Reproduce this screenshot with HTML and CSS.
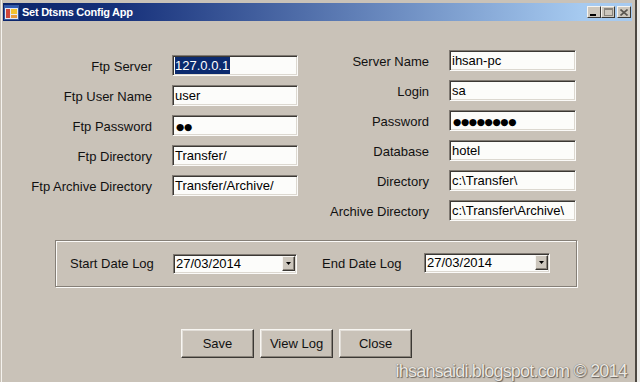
FILE: index.html
```html
<!DOCTYPE html>
<html>
<head>
<meta charset="utf-8">
<link rel="stylesheet" href="styles.css">
</head>
<body>
<div class="window">
  <div class="titlebar">
    <svg class="appicon" width="15" height="15" viewBox="0 0 15 15">
      <rect x="0.5" y="0.5" width="14" height="14" fill="#e4e9f2" stroke="#34589e"/>
      <rect x="1" y="1" width="13" height="2" fill="#2f5bb5"/>
      <rect x="2" y="4" width="4" height="9" fill="#d0473a"/>
      <rect x="7" y="4" width="6" height="5" fill="#f2c230"/>
      <rect x="7" y="10" width="6" height="3" fill="#e79a3c"/>
    </svg>
    <span class="title">Set Dtsms Config App</span>
    <div class="ctrls">
      <span class="cbtn"><svg width="8" height="7" viewBox="0 0 8 7"><rect x="0" y="5" width="6" height="2" fill="#000"/></svg></span>
      <span class="cbtn"><svg width="9" height="8" viewBox="0 0 9 8"><rect x="0.5" y="0.5" width="8" height="7" fill="none" stroke="#8a857d"/><rect x="0" y="0" width="9" height="2" fill="#8a857d"/></svg></span>
      <span class="cbtn cbtn-close"><svg width="8" height="7" viewBox="0 0 8 7"><path d="M0.5 0.5 L7.5 6.5 M7.5 0.5 L0.5 6.5" stroke="#5a5650" stroke-width="1.6" fill="none"/></svg></span>
    </div>
  </div>
  <div class="client">
    <div class="form">
      <div class="col col-left">
        <span class="lbl">Ftp Server</span><div class="field"><span class="sel">127.0.0.1</span></div>
        <span class="lbl">Ftp User Name</span><div class="field">user</div>
        <span class="lbl">Ftp Password</span><div class="field"><span class="pw">●●</span></div>
        <span class="lbl">Ftp Directory</span><div class="field">Transfer/</div>
        <span class="lbl">Ftp Archive Directory</span><div class="field">Transfer/Archive/</div>
      </div>
      <div class="col col-right">
        <span class="lbl">Server Name</span><div class="field">ihsan-pc</div>
        <span class="lbl">Login</span><div class="field">sa</div>
        <span class="lbl">Password</span><div class="field"><span class="pw">●●●●●●●●</span></div>
        <span class="lbl">Database</span><div class="field">hotel</div>
        <span class="lbl">Directory</span><div class="field">c:\Transfer\</div>
        <span class="lbl">Archive Directory</span><div class="field">c:\Transfer\Archive\</div>
      </div>
    </div>
    <div class="group">
      <span class="glbl glbl-start">Start Date Log</span>
      <div class="picker picker-start"><span class="val">27/03/2014</span><span class="dd"><svg width="5" height="3" viewBox="0 0 5 3"><path d="M0 0 H5 L2.5 3 Z" fill="#000"/></svg></span></div>
      <span class="glbl glbl-end">End Date Log</span>
      <div class="picker picker-end"><span class="val">27/03/2014</span><span class="dd"><svg width="5" height="3" viewBox="0 0 5 3"><path d="M0 0 H5 L2.5 3 Z" fill="#000"/></svg></span></div>
    </div>
    <div class="buttons">
      <div class="btn">Save</div>
      <div class="btn">View Log</div>
      <div class="btn">Close</div>
    </div>
  </div>
  <div class="watermark">ihsansaidi.blogspot.com © 2014</div>
</div>
</body>
</html>
```
FILE: styles.css
```css
body {
  margin: 0;
  background: #ecebe8;
  font-family: "Liberation Sans", Arial, sans-serif;
}

.window {
  position: relative;
  width: 635px;
  height: 382px;
  background: #c9c2b8;
  border-right: 2px solid #4d4842;
  box-shadow: inset 1px 0 #c9c2b8, inset 2px 0 #f4f2ee;
  overflow: hidden;
}

.titlebar {
  margin: 3px 3px 0 3px;
  height: 18px;
  background: linear-gradient(to right, #0a246a 0%, #16307a 18%, #a6caf0 92%);
  display: flex;
  align-items: center;
  padding-left: 1px;
}

.appicon {
  display: block;
  flex: none;
}

.title {
  margin-left: 3px;
  color: #fff;
  font-weight: bold;
  font-size: 11px;
  letter-spacing: -0.25px;
}

.ctrls {
  margin-left: auto;
  margin-right: 1px;
  display: flex;
  align-items: center;
}

.cbtn {
  width: 14px;
  height: 12px;
  box-sizing: border-box;
  background: #cdc7bd;
  border: 1px solid;
  border-color: #f6f4f0 #3b3834 #3b3834 #f6f4f0;
  display: flex;
  align-items: center;
  justify-content: center;
}

.cbtn-close {
  margin-left: 2px;
}

.client {
  padding-top: 29px;
}

.form {
  display: flex;
  align-items: flex-start;
  padding-left: 30px;
}

.col {
  display: grid;
  grid-template-columns: 122px 126px;
  column-gap: 20px;
  row-gap: 9px;
  grid-auto-rows: 21px;
  align-items: center;
}

.col-left {
  margin-top: 5px;
}

.col-right {
  margin-left: 21px;
  grid-template-columns: 110px 127px;
}

.lbl {
  text-align: right;
  font-size: 13px;
  color: #111;
  white-space: nowrap;
  padding-top: 2px;
}

.field {
  height: 21px;
  box-sizing: border-box;
  background: #fcfcfa;
  border: 1px solid;
  border-color: #7f7972 #fbfaf8 #fbfaf8 #7f7972;
  box-shadow: inset 1px 1px #3b3834, inset -1px -1px #dcd8d0;
  font-size: 13px;
  line-height: 17px;
  padding: 1px 0 0 2px;
  color: #000;
  white-space: nowrap;
  overflow: hidden;
}

.sel {
  display: inline-block;
  background: #0b2a6e;
  color: #fff;
  line-height: 17px;
  padding-right: 1px;
}

.pw {
  font-family: "DejaVu Sans", sans-serif;
  font-size: 9.5px;
  letter-spacing: -0.4px;
  padding-left: 1px;
}

.group {
  margin: 19px 0 0 55px;
  width: 522px;
  height: 47px;
  box-sizing: border-box;
  border: 1px solid #857f77;
  box-shadow: inset 1px 1px #fbfaf8, 1px 1px #fbfaf8;
  display: flex;
  align-items: center;
  padding-left: 14px;
}

.glbl {
  font-size: 13px;
  color: #111;
  white-space: nowrap;
}

.glbl-start {
  width: 103px;
}

.glbl-end {
  width: 102px;
  margin-left: 25px;
}

.picker {
  height: 20px;
  box-sizing: border-box;
  background: #fcfcfa;
  border: 1px solid;
  border-color: #7f7972 #fbfaf8 #fbfaf8 #7f7972;
  box-shadow: inset 1px 1px #3b3834, inset -1px -1px #dcd8d0;
  display: flex;
  align-items: center;
  padding: 1px;
}

.picker-start {
  width: 124px;
}

.picker-end {
  width: 126px;
  margin-top: -2px;
}

.val {
  flex: 1;
  font-size: 13px;
  line-height: 16px;
  padding-left: 1px;
  color: #000;
}

.dd {
  width: 13px;
  height: 15px;
  box-sizing: border-box;
  background: #cdc7bd;
  border: 1px solid;
  border-color: #f6f4f0 #3b3834 #3b3834 #f6f4f0;
  box-shadow: inset -1px -1px #8a847b;
  display: flex;
  align-items: center;
  justify-content: center;
}

.dd svg {
  display: block;
}

.buttons {
  display: flex;
  gap: 6px;
  margin: 42px 0 0 181px;
}

.btn {
  width: 73px;
  height: 29px;
  box-sizing: border-box;
  background: #c9c2b8;
  border: 1px solid;
  border-color: #f8f6f2 #3b3834 #3b3834 #f8f6f2;
  box-shadow: inset -1px -1px #8a847b, inset 1px 1px #e2ded8;
  font-size: 13px;
  color: #111;
  display: flex;
  align-items: center;
  justify-content: center;
}

.watermark {
  position: absolute;
  right: 8px;
  bottom: 2px;
  font-size: 18px;
  line-height: 18px;
  letter-spacing: -0.8px;
  color: #ece8e2;
  text-shadow: 0 0 1px #5d5750, 1px 1px 1px #6b655e;
  white-space: nowrap;
}
```
